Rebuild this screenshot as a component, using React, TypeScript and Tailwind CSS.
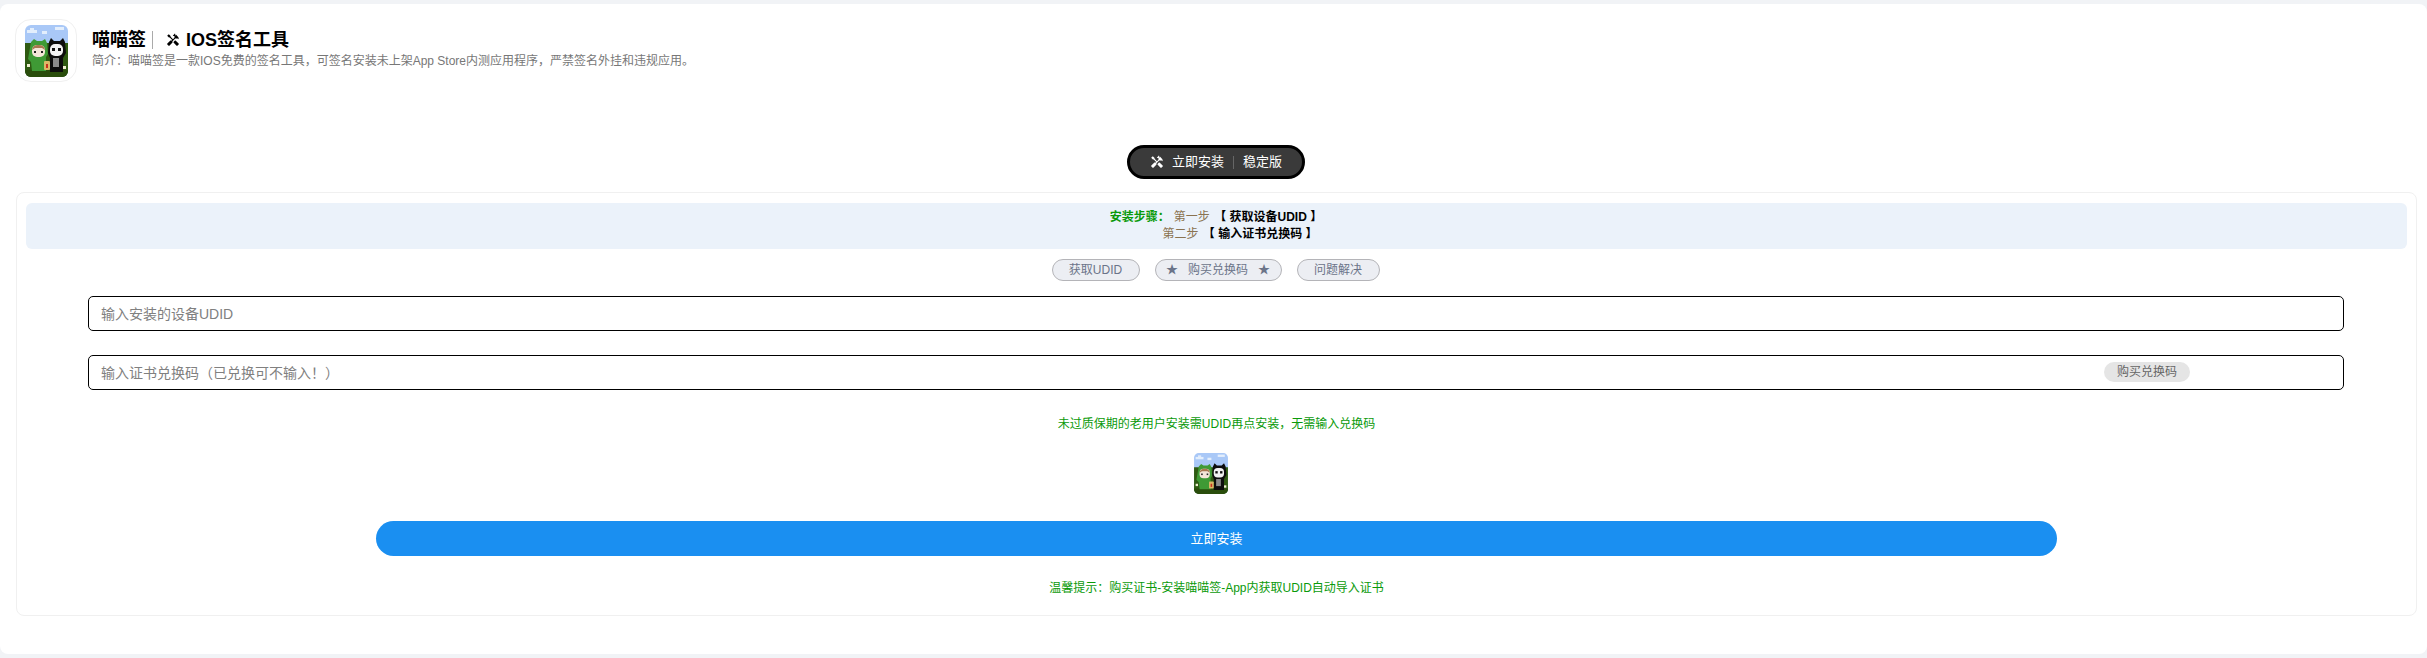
import { MdHandyman } from 'react-icons/md';

const font = { fontFamily: '"Liberation Sans", "Noto Sans CJK SC", sans-serif' };

// pixel-ish app logo, a hooded kid and a black cat on grass
const Logo = ({ className }: { className: string }) => (
  <svg viewBox="0 0 43 52" className={className}>
    <rect width="43" height="52" rx="6" fill="#a9c8f7" />
    <rect x="2" y="5" width="10" height="3" fill="#e3eefc" />
    <rect x="5" y="3" width="4" height="2" fill="#e3eefc" />
    <rect x="17" y="6" width="5" height="3" fill="#e3eefc" />
    <rect x="30" y="2" width="9" height="3" fill="#e3eefc" />
    <path d="M0 18h43v28a6 6 0 0 1-6 6H6a6 6 0 0 1-6-6z" fill="#2f5a12" />
    <path d="M0 45h43v1a6 6 0 0 1-6 6H6a6 6 0 0 1-6-6z" fill="#2a4d0c" />
    <path d="M6 17l3-3 3 2h5l3-2 2 4 1 11-2 3v14H7l-1-9-3-3z" fill="#3f9a35" />
    <rect x="7" y="20" width="13" height="12" rx="5" fill="#f4e6d8" />
    <path d="M7 25a6 6 0 0 1 6-5h1a6 6 0 0 1 6 5l-3-2h-7z" fill="#a9774f" />
    <rect x="9" y="26" width="2" height="2" fill="#222" />
    <rect x="16" y="26" width="2" height="2" fill="#222" />
    <path d="M24 17l2-4 3 3h6l3-3 2 4 1 11-3 5v14H25V33l-2-5z" fill="#0d0d0d" />
    <rect x="25" y="19" width="13" height="12" rx="5" fill="#f2f2f2" />
    <rect x="27" y="23" width="3" height="3" fill="#111" />
    <rect x="33" y="23" width="3" height="3" fill="#111" />
    <rect x="28" y="33" width="6" height="9" fill="#8a8a8a" />
    <rect x="19" y="36" width="6" height="9" rx="1" fill="#d9b866" />
    <rect x="21" y="39" width="2" height="4" fill="#c8321e" />
    <rect x="2" y="39" width="3" height="3" fill="#eef0d0" />
    <rect x="38" y="41" width="3" height="3" fill="#eef0d0" />
  </svg>
);

const pills = [
  { label: '获取UDID', width: 'w-[88px]' },
  { label: '★   购买兑换码   ★', width: 'w-[127px]' },
  { label: '问题解决', width: 'w-[83px]' },
];

export default function App() {
  return (
    <div className="min-h-screen bg-[#f1f3f6] py-1" style={font}>
      <div className="h-[650px] rounded-lg bg-white">
        <div className="flex pl-[15px] pt-[15px]">
          <div className="flex h-[63px] w-[62px] items-center justify-center rounded-2xl border border-[#f0f0f0] bg-white">
            <Logo className="h-[52px] w-[43px]" />
          </div>
          <div className="ml-[15px] pt-[9px]">
            <div className="flex items-center text-[18px] leading-[24px] font-bold text-black">
              喵喵签
              <span className="mx-[6px] h-[18px] w-px bg-[#aaa]"></span>
              <MdHandyman className="mr-[6px] ml-[7px] text-[14px]" />
              IOS签名工具
            </div>
            <p className="mt-px text-[12px] leading-[17px] text-[#777]">
              简介：喵喵签是一款IOS免费的签名工具，可签名安装未上架App Store内测应用程序，严禁签名外挂和违规应用。
            </p>
          </div>
        </div>

        <div className="mt-[63px] flex justify-center pl-[5px]">
          <div className="flex h-[34px] w-[178px] items-center justify-center rounded-full border-[3px] border-black bg-[#3a3a3a] text-[13px] text-white">
            <MdHandyman className="mr-2 text-[14px]" />
            立即安装
            <span className="mx-[9px] h-[13px] w-px bg-[#666]"></span>
            稳定版
          </div>
        </div>

        <div className="mt-[13px] mr-[10px] ml-4 h-[424px] rounded-lg border border-[#f0f0f0] px-[9px] pt-[10px]">
          <div className="h-[46px] rounded-md bg-[#ebf2fa] pt-[6px] text-center text-[12px] leading-[17px]">
            <div className="pr-[1px]">
              <span className="font-bold text-[#0a9a0a]">安装步骤：</span>
              <span className="ml-[4px] text-[#8a7350]">第一步</span>
              <span className="ml-px font-bold text-black"> 【 获取设备UDID 】</span>
            </div>
            <div className="pl-[47px]">
              <span className="text-[#8a7350]">第二步</span>
              <span className="ml-px font-bold text-black"> 【 输入证书兑换码 】</span>
            </div>
          </div>

          <div className="mt-[10px] flex justify-center gap-[15px] pr-[2px]">
            {pills.map((p) => (
              <div
                key={p.label}
                className={`flex h-[22px] ${p.width} items-center justify-center rounded-full border border-[#b4b4b8] bg-[#eceef3] text-[12px] whitespace-pre text-[#6b7489]`}
              >
                {p.label}
              </div>
            ))}
          </div>

          <div className="mt-[15px] ml-[62px] flex w-[2256px] flex-col gap-[24px]">
            <div className="flex h-[35px] items-center rounded-[5px] border border-black pt-px pl-3 text-[14px] text-[#808080]">
              输入安装的设备UDID
            </div>
            <div className="relative flex h-[35px] items-center rounded-[5px] border border-black pt-px pl-3 text-[14px] text-[#808080]">
              输入证书兑换码（已兑换可不输入！）
              <span className="absolute top-[6px] right-[153px] flex h-[20px] w-[86px] items-center justify-center rounded-full bg-[#e5e5e5] text-[12px] text-[#666]">
                购买兑换码
              </span>
            </div>
          </div>

          <p className="mt-[26px] text-center text-[12px] leading-[17px] text-[#0a9a0a]">
            未过质保期的老用户安装需UDID再点安装，无需输入兑换码
          </p>

          <div className="mt-[20px] flex justify-center pr-[11px]">
            <Logo className="h-[41px] w-[34px]" />
          </div>

          <div className="mx-auto mt-[27px] flex h-[35px] w-[1681px] items-center justify-center rounded-full bg-[#1a8ff1] text-[13px] text-white">
            立即安装
          </div>

          <p className="mt-[24px] text-center text-[12px] leading-[17px] text-[#0a9a0a]">
            温馨提示：购买证书-安装喵喵签-App内获取UDID自动导入证书
          </p>
        </div>
      </div>
    </div>
  );
}
